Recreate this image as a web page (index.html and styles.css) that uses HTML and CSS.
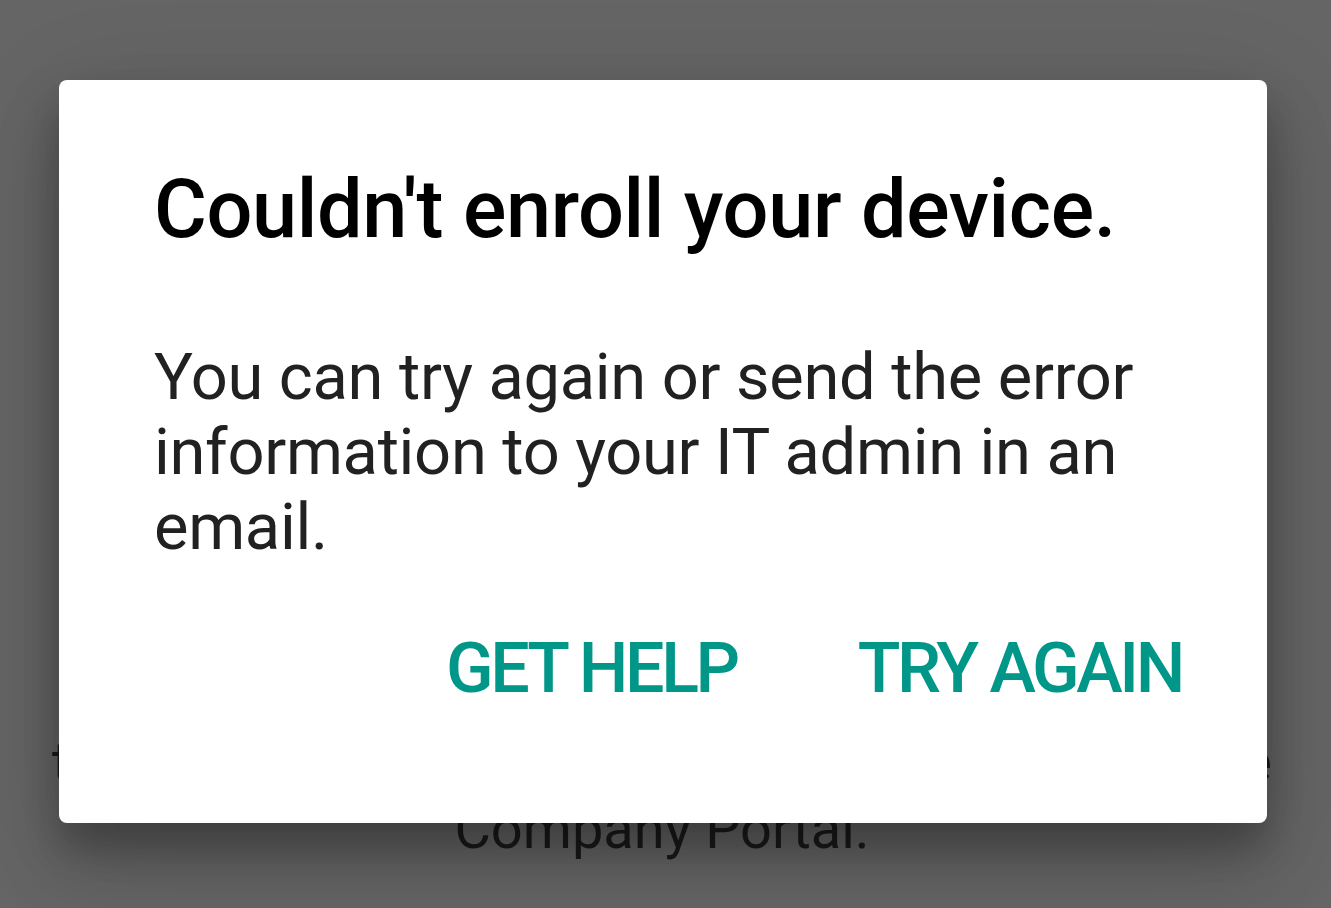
FILE: index.html
```html
<!DOCTYPE html>
<html lang="en">
<head>
    <meta charset="UTF-8">
    <meta name="viewport" content="width=device-width, initial-scale=1.0">
    <title>Company Portal</title>
    <link rel="stylesheet" href="styles.css">
</head>
<body>
    <div class="page">
        <div class="page-text">
            <p class="wide">then sign in to finish setting up this device in the</p>
            <p>Company Portal.</p>
        </div>
    </div>

    <div class="dialog">
        <h1 class="dialog-title">Couldn't enroll your device.</h1>
        <p class="dialog-body">You can try again or send the error information to your IT admin in an email.</p>
        <div class="dialog-actions">
            <a href="#" class="dialog-btn">GET HELP</a>
            <a href="#" class="dialog-btn">TRY AGAIN</a>
        </div>
    </div>
</body>
</html>
```

FILE: styles.css
```css
html, body {
    margin: 0;
    padding: 0;
    height: 100%;
}
body {
    font-family: Roboto, "Noto Sans", Arial, sans-serif;
    background-color: #656565;
    overflow: hidden;
    position: relative;
}
.page {
    height: 100%;
    display: flex;
    flex-direction: column;
    justify-content: flex-end;
    align-items: center;
    padding-right: 7px;
    box-sizing: border-box;
}
.page-text {
    width: 1220px;
    text-align: center;
    color: #1b1b1b;
    font-size: 56px;
    line-height: 67px;
    padding-bottom: 45px;
}
.page-text p {
    margin: 0;
    white-space: nowrap;
}
.page-text .wide {
    text-align: justify;
    text-align-last: justify;
}
.dialog {
    position: absolute;
    top: 80px;
    left: 59px;
    width: 1208px;
    height: 743px;
    box-sizing: border-box;
    padding: 82px 85px 0 95px;
    background-color: #fff;
    border-radius: 8px;
    box-shadow: 0 40px 70px rgba(0, 0, 0, 0.16),
                0 20px 110px rgba(0, 0, 0, 0.12),
                0 24px 36px rgba(0, 0, 0, 0.2);
}
.dialog-title {
    margin: 0;
    font-size: 81px;
    line-height: 96px;
    font-weight: 500;
    letter-spacing: -0.36px;
    color: #000;
}
.dialog-body {
    margin: 82px 0 0;
    font-size: 65px;
    line-height: 75px;
    letter-spacing: -0.3px;
    color: #212121;
}
.dialog-actions {
    display: flex;
    justify-content: flex-end;
    gap: 121px;
    margin-top: 63px;
}
.dialog-btn {
    font-size: 70px;
    line-height: 80px;
    font-weight: 500;
    letter-spacing: -3.4px;
    color: #009688;
    text-decoration: none;
}
```
